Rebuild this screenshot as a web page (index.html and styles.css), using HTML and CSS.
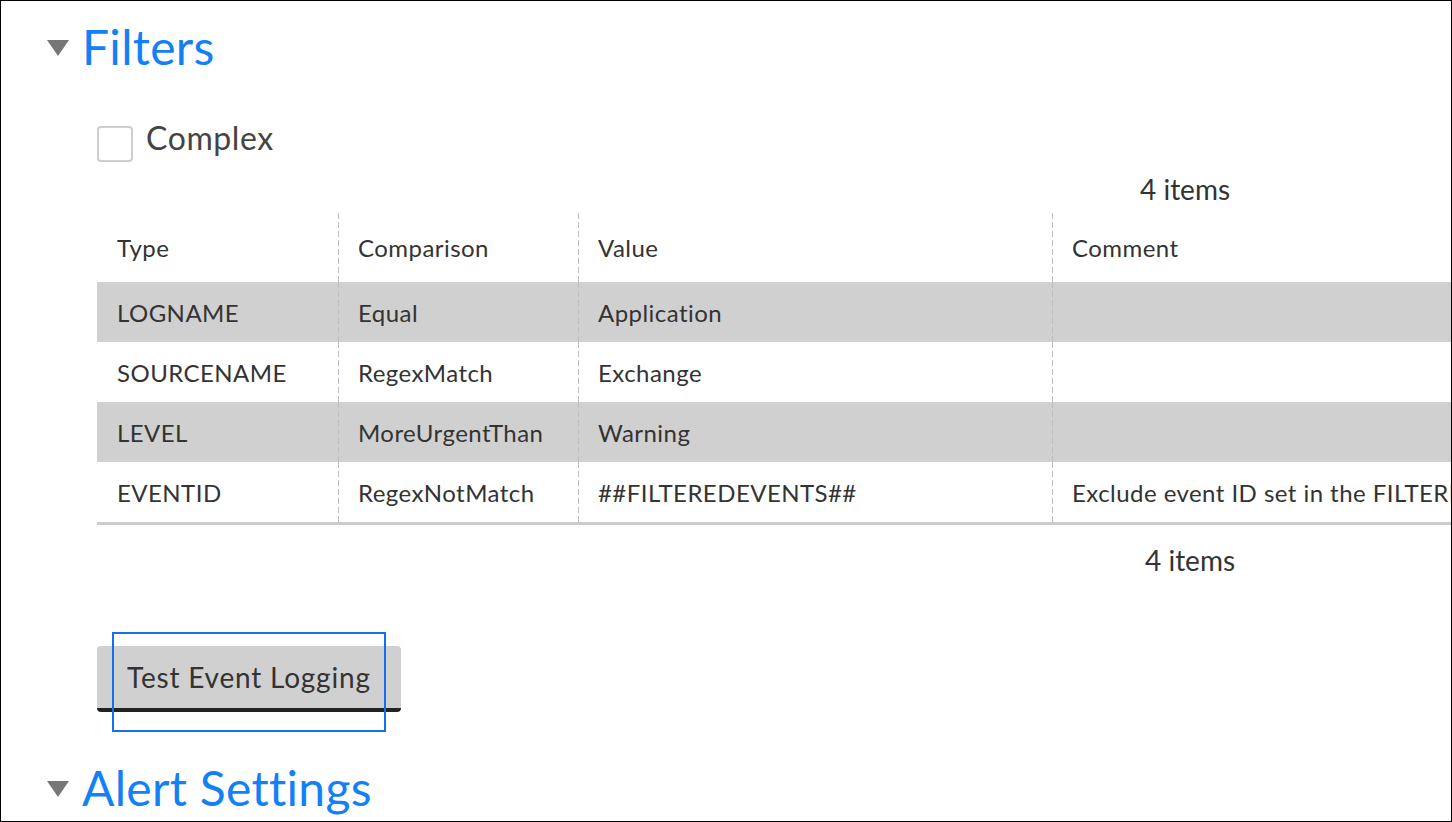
FILE: index.html
```html
<!DOCTYPE html>
<html>
<head>
<meta charset="utf-8">
<link rel="stylesheet" href="styles.css">
</head>
<body>
<div class="frame">
  <div class="section-head first">
    <span class="caret"></span>
    <h2 class="section-title">Filters</h2>
  </div>
  <div class="content">
    <label class="check-row">
      <span class="checkbox"></span>
      <span class="check-label">Complex</span>
    </label>
    <div class="count top">4 items</div>
    <div class="table-wrap">
      <table class="grid">
        <colgroup>
          <col class="c1"><col class="c2"><col class="c3"><col class="c4">
        </colgroup>
        <thead>
          <tr><th>Type</th><th>Comparison</th><th>Value</th><th>Comment</th></tr>
        </thead>
        <tbody>
          <tr class="alt"><td>LOGNAME</td><td>Equal</td><td>Application</td><td></td></tr>
          <tr><td>SOURCENAME</td><td>RegexMatch</td><td>Exchange</td><td></td></tr>
          <tr class="alt"><td>LEVEL</td><td>MoreUrgentThan</td><td>Warning</td><td></td></tr>
          <tr><td>EVENTID</td><td>RegexNotMatch</td><td>##FILTEREDEVENTS##</td><td>Exclude event ID set in the FILTEREDEVENTS property</td></tr>
        </tbody>
      </table>
    </div>
    <div class="count bottom">4 items</div>
    <div class="btn-wrap">
      <button class="btn">Test Event Logging</button>
      <span class="focus-ring"></span>
    </div>
  </div>
  <div class="section-head second">
    <span class="caret"></span>
    <h2 class="section-title">Alert Settings</h2>
  </div>
</div>
</body>
</html>
```
FILE: styles.css
```css
html, body {
  margin: 0;
  padding: 0;
  background: #fff;
}
body {
  font-family: Lato, "Noto Sans", "Liberation Sans", sans-serif;
  color: #333;
}
.frame {
  width: 1452px;
  height: 822px;
  box-sizing: border-box;
  border: 1px solid #000;
  overflow: hidden;
  position: relative;
}
.section-head {
  display: flex;
  align-items: flex-start;
  padding-left: 46px;
}
.section-head.first {
  margin-top: 18px;
}
.caret {
  width: 0;
  height: 0;
  border-left: 11px solid transparent;
  border-right: 11px solid transparent;
  border-top: 16px solid #777;
  margin-right: 13px;
  margin-top: 21px;
}
.section-title {
  margin: 0;
  font-weight: 400;
  font-size: 48px;
  line-height: 56px;
  letter-spacing: 0.3px;
  color: #1480f6;
}
.content {
  padding-left: 96px;
}
.check-row {
  display: flex;
  align-items: flex-start;
  margin-top: 45px;
  height: 42px;
}
.checkbox {
  width: 36px;
  height: 36px;
  border: 2px solid #cdcdcd;
  border-radius: 4px;
  box-sizing: border-box;
  margin-right: 13px;
  margin-top: 6px;
  background: #fff;
}
.check-label {
  font-size: 32px;
  line-height: 36px;
  letter-spacing: 0.6px;
  color: #444;
}
.count {
  font-size: 28px;
  line-height: 32px;
  height: 32px;
  color: #333;
}
.count.top {
  margin-top: 11px;
  padding-left: 1043px;
}
.count.bottom {
  margin-top: 19px;
  padding-left: 1048px;
}
.table-wrap {
  margin-top: 8px;
  width: 1400px;
}
.grid {
  border-collapse: collapse;
  table-layout: fixed;
  width: 1400px;
  font-size: 24px;
  letter-spacing: 0.45px;
  color: #333;
  border-bottom: 3px solid #cbcbcb;
}
.c1 { width: 241px; }
.c2 { width: 240px; }
.c3 { width: 474px; }
.c4 { width: 445px; }
.grid th, .grid td {
  text-align: left;
  font-weight: 400;
  padding: 0 0 0 20px;
  white-space: nowrap;
  overflow: visible;
  vertical-align: middle;
  background-image: linear-gradient(#bdbdbd 6px, transparent 6px);
  background-size: 1px 9px;
  background-repeat: repeat-y;
  background-position: 0 0;
}
.grid th:first-child, .grid td:first-child {
  background-image: none;
}
.grid th {
  height: 69px;
  box-sizing: border-box;
}
.grid td {
  height: 60px;
}
.grid tr.alt td {
  background-color: #d0d0d0;
}
.btn-wrap {
  position: relative;
  display: inline-block;
  margin-top: 70px;
  vertical-align: top;
}
.btn {
  display: block;
  font-family: inherit;
  font-size: 28px;
  letter-spacing: 0.8px;
  color: #333;
  background: #d0d0d0;
  border: none;
  border-bottom: 4px solid #232323;
  border-radius: 4px;
  width: 304px;
  height: 66px;
  padding: 0 0 0 30px;
  text-align: left;
  box-sizing: border-box;
}
.focus-ring {
  position: absolute;
  left: 15px;
  top: -14px;
  width: 274px;
  height: 100px;
  box-sizing: border-box;
  border: 2px solid #1172f0;
}
.section-head.second {
  margin-top: 48px;
}
```
